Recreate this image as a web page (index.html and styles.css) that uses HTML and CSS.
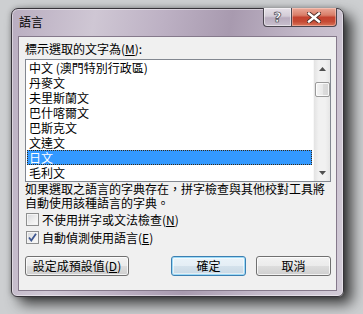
FILE: index.html
```html
<!DOCTYPE html>
<html lang="zh-Hant">
<head>
<meta charset="utf-8">
<title>語言</title>
<link rel="stylesheet" href="styles.css">
</head>
<body>
<div class="window">
  <div class="titlebar">
    <span class="title">語言</span>
    <div class="caption-buttons">
      <div class="cap help"><span class="q">?</span></div>
      <div class="cap close">
        <svg width="14" height="11" viewBox="0 0 14 11">
          <path d="M2 1.5L12 9.5M12 1.5L2 9.5" stroke="#4a2a24" stroke-width="4.2" stroke-linecap="square"/>
          <path d="M2 1.5L12 9.5M12 1.5L2 9.5" stroke="#ffffff" stroke-width="2.4" stroke-linecap="square"/>
        </svg>
      </div>
    </div>
  </div>
  <div class="client">
    <div class="label">標示選取的文字為(<u>M</u>):</div>
    <div class="listbox">
      <ul class="items">
        <li>中文 (澳門特別行政區)</li>
        <li>丹麥文</li>
        <li>夫里斯蘭文</li>
        <li>巴什喀爾文</li>
        <li>巴斯克文</li>
        <li>文達文</li>
        <li class="selected">日文</li>
        <li>毛利文</li>
      </ul>
      <div class="scrollbar">
        <div class="arrow"><svg width="7" height="4" viewBox="0 0 7 4"><path d="M0 4H7L3.5 0Z" fill="#505050"/></svg></div>
        <div class="thumb"></div>
        <div class="track"></div>
        <div class="arrow"><svg width="7" height="4" viewBox="0 0 7 4"><path d="M0 0H7L3.5 4Z" fill="#505050"/></svg></div>
      </div>
    </div>
    <p class="note">如果選取之語言的字典存在，拼字檢查與其他校對工具將<br>自動使用該種語言的字典。</p>
    <div class="check"><span class="box"></span><span>不使用拼字或文法檢查(<u>N</u>)</span></div>
    <div class="check"><span class="box"><svg width="9" height="9" viewBox="0 0 9 9"><path d="M1 4.5L3.3 7.5L8 0.8" fill="none" stroke="#3d5690" stroke-width="1.8"/></svg></span><span>自動偵測使用語言(<u>E</u>)</span></div>
    <div class="buttons">
      <button class="btn wide">設定成預設值(<u>D</u>)</button>
      <div class="pair">
        <button class="btn default">確定</button>
        <button class="btn">取消</button>
      </div>
    </div>
  </div>
</div>
</body>
</html>
```

FILE: styles.css
```css
html, body {
  margin: 0;
  padding: 0;
}
body {
  width: 363px;
  height: 314px;
  overflow: hidden;
  background: #cdcfd1;
  font-family: "Noto Sans CJK TC", "Noto Sans", sans-serif;
  font-size: 12px;
  color: #000;
}
.window {
  margin: 8px 0 0 11px;
  width: 333px;
  height: 289px;
  box-sizing: border-box;
  border: 1px solid #363339;
  border-radius: 7px 7px 6px 6px;
  background: linear-gradient(100deg, #b9adc0 0%, #cfc7d4 22%, #bdb1c4 40%, #a89aaf 58%, #c3b9c9 78%, #d3ccd8 100%);
  box-shadow: inset 0 0 0 1px rgba(255, 255, 255, 0.45), 0 0 5px rgba(0, 0, 0, 0.3), 8px 7px 14px rgba(0, 0, 0, 0.72);
  display: flex;
  flex-direction: column;
  padding: 0 6px 5px;
}
.titlebar {
  height: 27px;
  flex: none;
  display: flex;
  justify-content: space-between;
  align-items: flex-start;
}
.title {
  margin: 6px 0 0 1px;
  line-height: 14px;
}
.caption-buttons {
  display: flex;
  margin-top: -1px;
}
.cap {
  height: 19px;
  box-sizing: border-box;
  border: 1px solid #4b4650;
  border-top: none;
  display: flex;
  align-items: center;
  justify-content: center;
}
.help {
  width: 28px;
  border-radius: 0 0 0 4px;
  border-right: none;
  background: linear-gradient(#e6e1e8 0%, #d3ccd7 45%, #b8acbe 55%, #c9c0ce 100%);
  box-shadow: inset 0 0 0 1px rgba(255, 255, 255, 0.5);
}
.q {
  font-family: "DejaVu Sans", sans-serif;
  font-weight: bold;
  font-size: 14px;
  line-height: 14px;
  color: #fff;
  -webkit-text-stroke: 0.6px #4b4650;
  text-shadow: 0 0 1px #3a3540;
}
.close {
  width: 46px;
  border-radius: 0 0 4px 0;
  background: linear-gradient(#eaa999 0%, #d97e69 40%, #c4422f 52%, #c54a34 75%, #d97459 100%);
  box-shadow: inset 0 0 0 1px rgba(255, 220, 210, 0.45);
}
.client {
  flex: 1;
  box-sizing: border-box;
  background: #f0f0f0;
  border: 1px solid #85798b;
  padding: 5px 5px 0 6px;
  display: flex;
  flex-direction: column;
}
.label {
  line-height: 14px;
  height: 14px;
}
u {
  text-decoration: underline;
  text-underline-offset: 1px;
}
.listbox {
  margin-top: 3px;
  height: 123px;
  box-sizing: border-box;
  border: 1px solid #828790;
  background: #fff;
  display: flex;
}
.items {
  list-style: none;
  margin: 0;
  padding: 0;
  flex: 1;
}
.items li {
  height: 15px;
  line-height: 15px;
  margin: 0 1px;
  padding-left: 2px;
  box-sizing: border-box;
  white-space: nowrap;
}
.items li.selected {
  background: #3399ff;
  color: #fff;
  border: 1px dotted #3b2a12;
  line-height: 13px;
  padding-left: 1px;
}
.scrollbar {
  width: 17px;
  flex: none;
  background: linear-gradient(to right, #e3e3e3, #f1f1f1 30%, #f1f1f1 70%, #e6e6e6);
  border-left: 1px solid #f8f8f8;
  box-sizing: border-box;
  display: flex;
  flex-direction: column;
  align-items: center;
}
.arrow {
  height: 17px;
  width: 100%;
  display: flex;
  align-items: center;
  justify-content: center;
  flex: none;
}
.thumb {
  margin-top: 5px;
  width: 15px;
  height: 15px;
  box-sizing: border-box;
  border: 1px solid #9a9a9a;
  border-radius: 2px;
  background: linear-gradient(to right, #f4f4f4, #e9e9e9 50%, #dcdcdc 51%, #d6d6d6);
  box-shadow: inset 0 0 0 1px rgba(255, 255, 255, 0.8);
}
.track {
  flex: 1;
}
.note {
  margin: 0;
  line-height: 14px;
}
.check {
  display: flex;
  align-items: center;
  height: 18px;
}
.check:first-of-type {
  margin-top: 9px;
}
.box {
  width: 13px;
  height: 13px;
  box-sizing: border-box;
  margin: 0 3px 0 1px;
  border: 1px solid #8e8f8f;
  background: linear-gradient(135deg, #d5d7db 0%, #eeeeee 55%, #fbfbfb 100%);
  box-shadow: inset 0 0 0 1px #f4f4f4;
  display: flex;
  align-items: center;
  justify-content: center;
}
.buttons {
  margin-top: 10px;
  display: flex;
  justify-content: space-between;
  align-items: flex-start;
}
.pair {
  display: flex;
  gap: 10px;
}
.btn {
  height: 20px;
  width: 75px;
  padding: 0;
  box-sizing: border-box;
  border: 1px solid #707070;
  border-radius: 3px;
  background: linear-gradient(#f2f2f2 0%, #ebebeb 50%, #dddddd 51%, #cfcfcf 100%);
  box-shadow: inset 0 0 0 1px rgba(255, 255, 255, 0.75);
  font-family: "Noto Sans CJK TC", "Noto Sans", sans-serif;
  font-size: 12px;
  line-height: 16px;
  color: #000;
}
.btn.wide {
  width: 104px;
}
.btn.default {
  border-color: #3c7fb1;
  box-shadow: inset 0 0 0 1px #9cdaf7, inset 0 0 0 2px rgba(255, 255, 255, 0.5);
  background: linear-gradient(#eaf3f9 0%, #e4eef5 50%, #d4e2ec 51%, #c8d8e4 100%);
}
```
